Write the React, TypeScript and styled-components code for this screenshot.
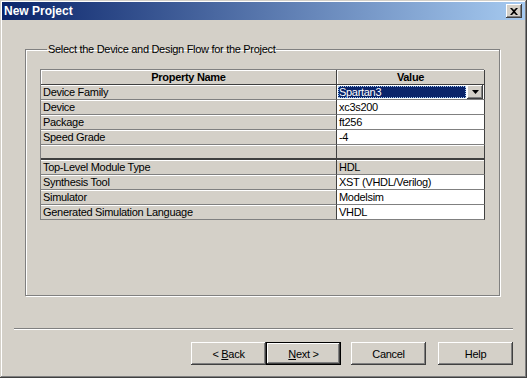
import { FC } from 'react';
import styled, { createGlobalStyle } from 'styled-components';

type RowKind = 'combo' | 'edit' | 'static' | 'spacer';

interface PropRow {
  name: string;
  value: string;
  kind: RowKind;
}

const rows: PropRow[] = [
  { name: 'Device Family', value: 'Spartan3', kind: 'combo' },
  { name: 'Device', value: 'xc3s200', kind: 'edit' },
  { name: 'Package', value: 'ft256', kind: 'edit' },
  { name: 'Speed Grade', value: '-4', kind: 'edit' },
  { name: '', value: '', kind: 'spacer' },
  { name: 'Top-Level Module Type', value: 'HDL', kind: 'static' },
  { name: 'Synthesis Tool', value: 'XST (VHDL/Verilog)', kind: 'edit' },
  { name: 'Simulator', value: 'Modelsim', kind: 'edit' },
  { name: 'Generated Simulation Language', value: 'VHDL', kind: 'edit' },
];

const GlobalStyle = createGlobalStyle`
  html, body {
    margin: 0;
    padding: 0;
    background: #d4d0c8;
  }
  body {
    font-family: "Liberation Sans", Arial, sans-serif;
    font-size: 11px;
    letter-spacing: -0.3px;
    color: #000;
  }
`;

const raised = `
  box-shadow: inset -1px -1px #404040, inset 1px 1px #ffffff,
    inset -2px -2px #808080, inset 2px 2px #d4d0c8;
`;

const Window = styled.div`
  width: 527px;
  height: 378px;
  box-sizing: border-box;
  padding: 2px;
  display: flex;
  flex-direction: column;
  background: #d4d0c8;
  box-shadow: inset -1px -1px #404040, inset 1px 1px #d4d0c8,
    inset -2px -2px #808080, inset 2px 2px #ffffff;
`;

const TitleBar = styled.div`
  height: 18px;
  display: flex;
  align-items: center;
  justify-content: space-between;
  padding: 0 3px 0 2px;
  background: linear-gradient(to right, #0a246a, #a6caf0);
`;

const Title = styled.span`
  color: #fff;
  font-weight: bold;
  font-size: 12px;
  letter-spacing: 0;
`;

const CloseButton = styled.div`
  width: 16px;
  height: 14px;
  display: flex;
  align-items: center;
  justify-content: center;
  background: #d4d0c8;
  ${raised}
`;

const GroupBox = styled.fieldset`
  margin: 23px 25px 0 23px;
  height: 253px;
  box-sizing: border-box;
  padding: 13px 12px 0 14px;
  border: 1px solid #808080;
  box-shadow: 1px 1px #ffffff, inset 1px 1px #ffffff;
  min-width: 0;
`;

const Caption = styled.legend`
  padding: 0 1px;
  margin-left: 7px;
  line-height: 13px;
`;

const PropTable = styled.div`
  width: 444px;
  display: grid;
  grid-template-columns: 296px 148px;
  border-top: 1px solid #808080;
  border-left: 1px solid #808080;
  box-sizing: border-box;
`;

const HeaderCell = styled.div`
  height: 15px;
  line-height: 15px;
  text-align: center;
  font-weight: bold;
  background: #d4d0c8;
  box-sizing: border-box;
  border-right: 1px solid #404040;
  border-bottom: 1px solid #404040;
  box-shadow: inset 1px 1px #ffffff;
`;

const NameCell = styled.div<{ $spacer?: boolean }>`
  height: 15px;
  line-height: 15px;
  padding-left: 2px;
  box-sizing: border-box;
  background: #d4d0c8;
  border-right: 1px solid #404040;
  border-bottom: ${(p) => (p.$spacer ? '2px solid #404040' : '1px solid #808080')};
  box-shadow: inset 0 1px #ffffff;
  white-space: nowrap;
`;

const ValueCell = styled.div<{ $white?: boolean; $spacer?: boolean }>`
  height: 15px;
  line-height: 15px;
  padding-left: 2px;
  box-sizing: border-box;
  background: ${(p) => (p.$white ? '#ffffff' : '#d4d0c8')};
  border-right: 1px solid #404040;
  border-bottom: ${(p) => (p.$spacer ? '2px solid #404040' : '1px solid #808080')};
  box-shadow: ${(p) => (p.$white ? 'none' : 'inset 0 1px #ffffff')};
  white-space: nowrap;
`;

const Combo = styled.div`
  display: flex;
  height: 14px;
  margin-left: -1px;
  margin-right: 1px;
`;

const ComboText = styled.div`
  flex: 1;
  margin: 1px 1px 1px 0;
  padding-left: 1px;
  line-height: 13px;
  background: #0a246a;
  color: #fff;
  outline: 1px dotted #a6caf0;
  outline-offset: -1px;
`;

const DropButton = styled.div`
  width: 16px;
  height: 14px;
  display: flex;
  align-items: center;
  justify-content: center;
  background: #d4d0c8;
  ${raised}
`;

const Footer = styled.div`
  margin-top: auto;
  padding: 0 12px 11px 12px;
`;

const Separator = styled.div`
  height: 0;
  border-top: 1px solid #808080;
  border-bottom: 1px solid #ffffff;
  margin-bottom: 12px;
`;

const ButtonRow = styled.div`
  display: flex;
  justify-content: flex-end;
`;

const Button = styled.div<{ $default?: boolean; $gap?: number }>`
  width: 75px;
  height: 23px;
  box-sizing: border-box;
  margin-left: ${(p) => p.$gap ?? 0}px;
  display: flex;
  align-items: center;
  justify-content: center;
  background: #d4d0c8;
  border: ${(p) => (p.$default ? '1px solid #000' : 'none')};
  ${raised}

  u {
    text-decoration: underline;
  }
`;

const App: FC = () => {
  return (
    <>
      <GlobalStyle />
      <Window>
        <TitleBar>
          <Title>New Project</Title>
          <CloseButton>
            <svg width="8" height="7" viewBox="0 0 8 7">
              <path d="M0 0h2l2 2 2-2h2L5 3.5 8 7H6L4 5 2 7H0l3-3.5z" fill="#000" />
            </svg>
          </CloseButton>
        </TitleBar>

        <GroupBox>
          <Caption>Select the Device and Design Flow for the Project</Caption>
          <PropTable>
            <HeaderCell>Property Name</HeaderCell>
            <HeaderCell>Value</HeaderCell>
            {rows.map((row, i) => (
              <RowCells key={i} row={row} />
            ))}
          </PropTable>
        </GroupBox>

        <Footer>
          <Separator />
          <ButtonRow>
            <Button>
              <span>
                &lt; <u>B</u>ack
              </span>
            </Button>
            <Button $default>
              <span>
                <u>N</u>ext &gt;
              </span>
            </Button>
            <Button $gap={10}>Cancel</Button>
            <Button $gap={12}>Help</Button>
          </ButtonRow>
        </Footer>
      </Window>
    </>
  );
};

const RowCells: FC<{ row: PropRow }> = ({ row }) => {
  const spacer = row.kind === 'spacer';
  return (
    <>
      <NameCell $spacer={spacer}>{row.name}</NameCell>
      {row.kind === 'combo' ? (
        <ValueCell $white>
          <Combo>
            <ComboText>{row.value}</ComboText>
            <DropButton>
              <svg width="7" height="4" viewBox="0 0 7 4">
                <path d="M0 0h7L3.5 4z" fill="#000" />
              </svg>
            </DropButton>
          </Combo>
        </ValueCell>
      ) : (
        <ValueCell $white={row.kind === 'edit'} $spacer={spacer}>
          {row.value}
        </ValueCell>
      )}
    </>
  );
};

export default App;
